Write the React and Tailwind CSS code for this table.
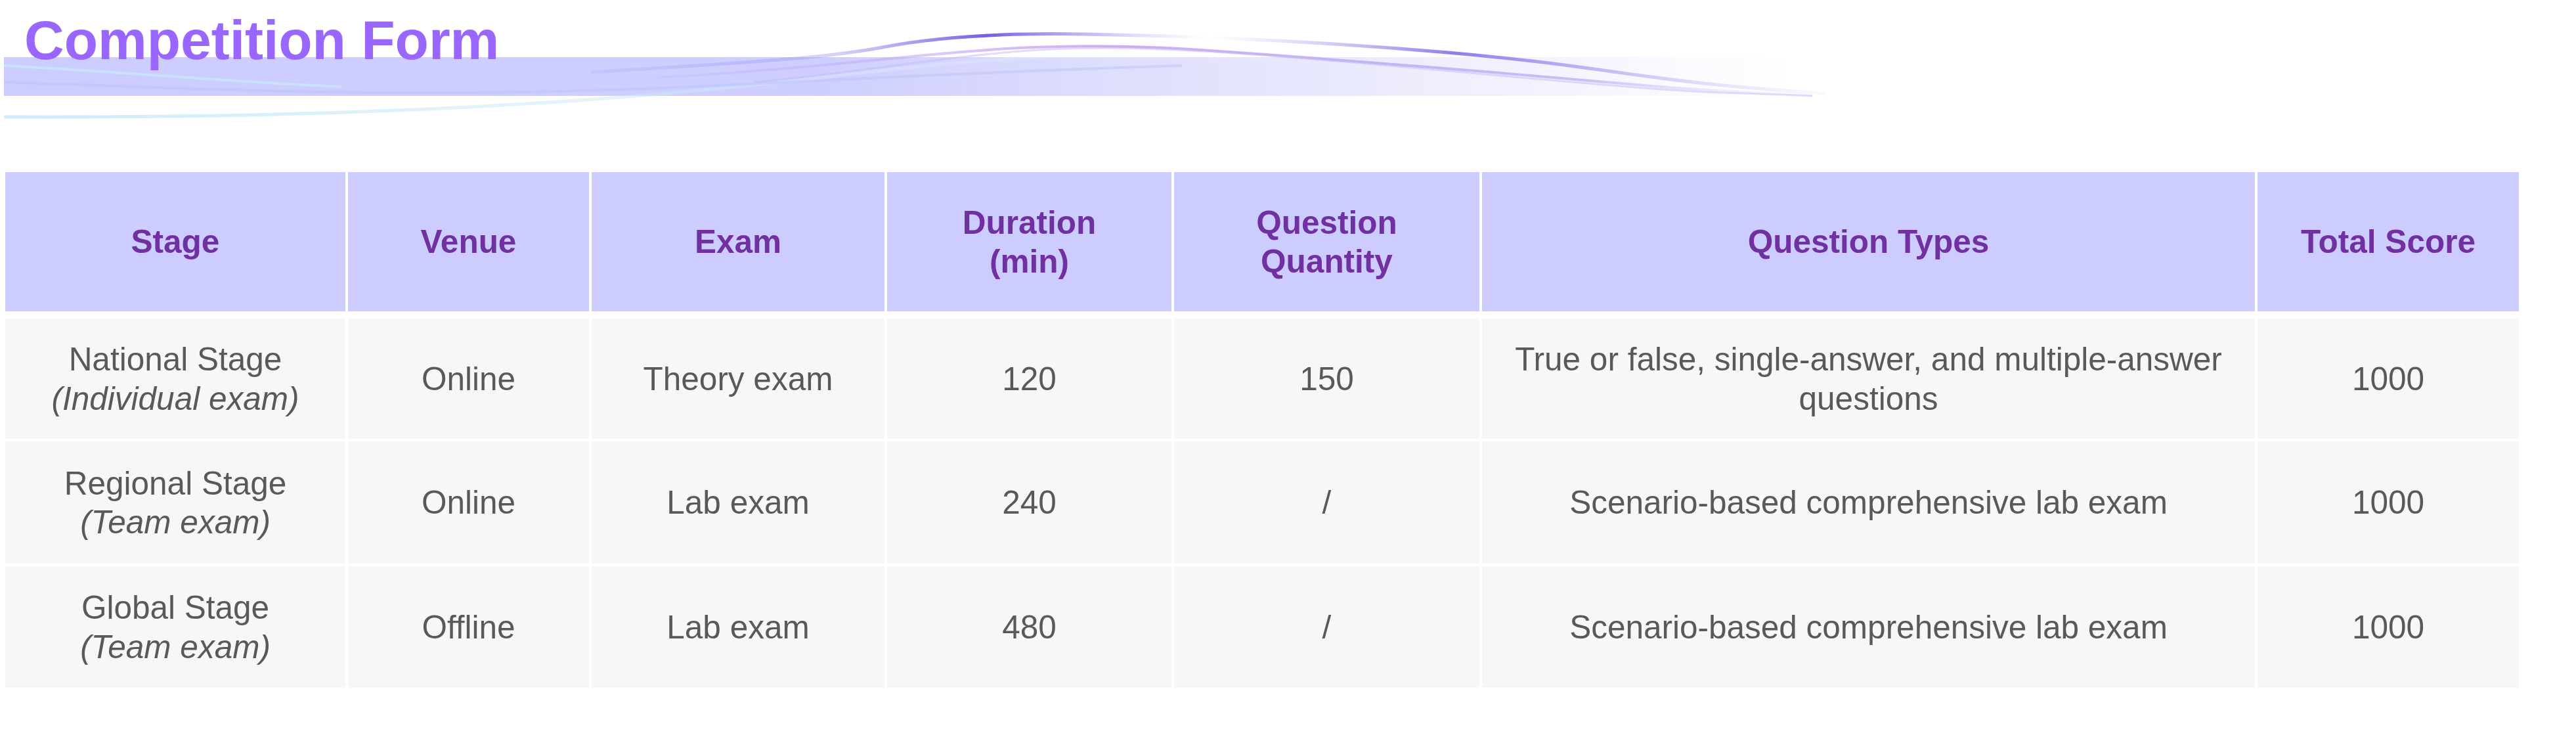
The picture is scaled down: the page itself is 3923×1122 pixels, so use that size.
import React from 'react';

const cols = 'grid grid-cols-[518px_367px_446px_433px_465px_1177px_398px] gap-x-[4px]';

const headers = [
  ['Stage'],
  ['Venue'],
  ['Exam'],
  ['Duration', '(min)'],
  ['Question', 'Quantity'],
  ['Question Types'],
  ['Total Score'],
];

const rows = [
  {
    h: 'h-[183px]',
    stage: 'National Stage',
    team: '(Individual exam)',
    cells: ['Online', 'Theory exam', '120', '150', 'True or false, single-answer, and multiple-answer questions', '1000'],
  },
  {
    h: 'h-[186px]',
    stage: 'Regional Stage',
    team: '(Team exam)',
    cells: ['Online', 'Lab exam', '240', '/', 'Scenario-based comprehensive lab exam', '1000'],
  },
  {
    h: 'h-[185px]',
    stage: 'Global Stage',
    team: '(Team exam)',
    cells: ['Offline', 'Lab exam', '480', '/', 'Scenario-based comprehensive lab exam', '1000'],
  },
];

// decorative ribbon behind the title
const Ribbon = () => (
  <svg
    className="absolute left-0 top-0"
    width="3923"
    height="220"
    viewBox="0 0 3923 220"
  >
    <defs>
      <linearGradient id="band" x1="0" y1="0" x2="1" y2="0">
        <stop offset="0" stopColor="#ccccff" />
        <stop offset="0.45" stopColor="#ceceff" />
        <stop offset="0.62" stopColor="#dedefd" />
        <stop offset="0.85" stopColor="#f2f2fe" />
        <stop offset="1" stopColor="#ffffff" />
      </linearGradient>
      <linearGradient id="swoosh" x1="0" y1="0" x2="1" y2="0">
        <stop offset="0" stopColor="#b9e4f7" stopOpacity="0.7" />
        <stop offset="0.5" stopColor="#cdeaf7" stopOpacity="0.5" />
        <stop offset="1" stopColor="#ffffff" stopOpacity="0" />
      </linearGradient>
      <linearGradient id="arc" x1="0" y1="0" x2="1" y2="0">
        <stop offset="0" stopColor="#9a8cf0" stopOpacity="0.15" />
        <stop offset="0.2" stopColor="#9a8cf0" stopOpacity="0.4" />
        <stop offset="0.32" stopColor="#6d55e0" stopOpacity="0.95" />
        <stop offset="0.5" stopColor="#ffffff" stopOpacity="0.5" />
        <stop offset="0.7" stopColor="#7a66e6" stopOpacity="0.85" />
        <stop offset="1" stopColor="#c8c2f5" stopOpacity="0.1" />
      </linearGradient>
      <linearGradient id="arc2" x1="0" y1="0" x2="1" y2="0">
        <stop offset="0" stopColor="#b8a6f5" stopOpacity="0.15" />
        <stop offset="0.4" stopColor="#c6a3f5" stopOpacity="0.9" />
        <stop offset="0.8" stopColor="#a99cf0" stopOpacity="0.6" />
        <stop offset="1" stopColor="#e0dcfb" stopOpacity="0.1" />
      </linearGradient>
    </defs>
    <rect x="6" y="87" width="2720" height="59" fill="url(#band)" />
    <path d="M6 178 C 500 180, 900 160, 1250 118 S 1700 80, 2000 95" stroke="url(#swoosh)" strokeWidth="5" fill="none" />
    <path d="M6 125 C 300 135, 500 145, 800 140 S 1300 115, 1800 100" stroke="#b9c4f7" strokeOpacity="0.5" strokeWidth="4" fill="none" />
    <path d="M6 100 C 200 110, 350 125, 520 132" stroke="#c9e6f6" strokeOpacity="0.8" strokeWidth="4" fill="none" />
    <path d="M900 110 C 1100 97, 1250 90, 1344 72 S 1540 50, 1650 52 S 1950 58, 2205 80 S 2500 125, 2780 142" stroke="url(#arc)" strokeWidth="5" fill="none" />
    <path d="M1000 118 C 1250 105, 1420 78, 1574 72 S 1800 73, 2148 100 S 2480 133, 2760 145" stroke="url(#arc2)" strokeWidth="4" fill="none" />
    <path d="M1150 125 C 1330 108, 1460 82, 1600 75 S 1900 80, 2250 112 S 2560 138, 2760 146" stroke="#c3b9f6" strokeOpacity="0.5" strokeWidth="3" fill="none" />
  </svg>
);

export default function App() {
  return (
    <div className="w-[3923px] h-[1122px] bg-white font-['Liberation_Sans',Arial,sans-serif] overflow-hidden">
      <div className="relative h-[262px]">
        <Ribbon />
        <h1 className="relative pt-[19px] pl-[37px] text-[84px] leading-none font-bold text-[#9966ff]">
          Competition Form
        </h1>
      </div>

      <div className="pl-[8px] flex flex-col">
        {/* header */}
        <div className={`${cols} h-[212px] mb-[11px]`}>
          {headers.map((lines, i) => (
            <div
              key={i}
              className="bg-[#ccccff] flex flex-col items-center justify-center text-center text-[49.5px] leading-[1.2] font-bold text-[#7030a0]"
            >
              {lines.map((l) => (
                <span key={l}>{l}</span>
              ))}
            </div>
          ))}
        </div>

        {/* body */}
        <div className="flex flex-col gap-y-[4px]">
          {rows.map((r) => (
            <div key={r.stage} className={`${cols} ${r.h}`}>
              <div className="bg-[#f7f7f7] flex flex-col items-center justify-center text-center text-[49.5px] leading-[1.2] text-[#595959]">
                <span>{r.stage}</span>
                <span className="italic">{r.team}</span>
              </div>
              {r.cells.map((c, i) => (
                <div
                  key={i}
                  className="bg-[#f7f7f7] flex items-center justify-center text-center px-[40px] text-[49.5px] leading-[1.2] text-[#595959]"
                >
                  {c}
                </div>
              ))}
            </div>
          ))}
        </div>
      </div>
    </div>
  );
}
